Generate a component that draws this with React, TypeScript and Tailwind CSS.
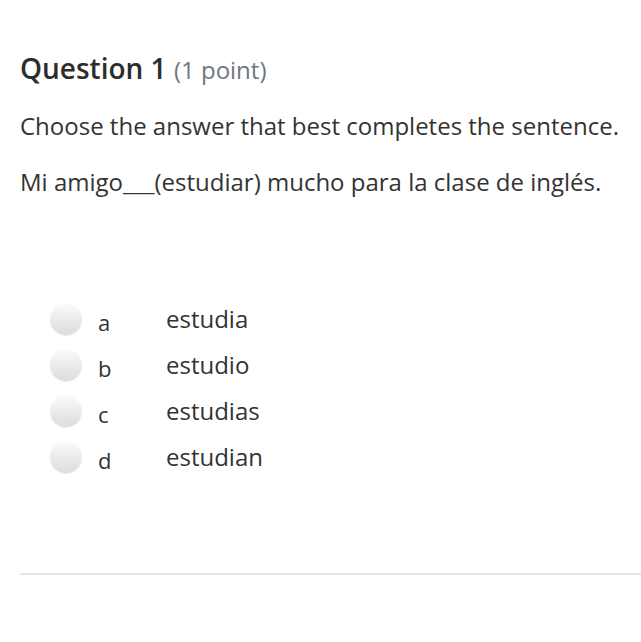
import React from 'react';

const options = [
  { letter: 'a', text: 'estudia' },
  { letter: 'b', text: 'estudio' },
  { letter: 'c', text: 'estudias' },
  { letter: 'd', text: 'estudian' },
];

export default function App() {
  return (
    <div className="min-h-screen w-[641px] bg-white text-[#333333]" style={{ fontFamily: '"Open Sans", sans-serif' }}>
      <div className="pl-5 pt-[50px]">
        <h2 className="text-[28px] leading-[36px] font-semibold text-[#2d2d2d]">
          Question 1 <span className="text-[24px] font-normal text-[#6f7780]">(1 point)</span>
        </h2>
        <p className="mt-[22px] text-[24px] leading-[32px]">Choose the answer that best completes the sentence.</p>
        <p className="mt-[24px] text-[24px] leading-[32px]">Mi amigo___(estudiar) mucho para la clase de inglés.</p>
      </div>

      {/* ANSWERS */}
      <div className="mt-[105px] pl-[50px] flex flex-col gap-[14px]">
        {options.map(o => (
          <div key={o.letter} className="flex items-center h-[32px]">
            <div className="w-[32px] h-[32px] rounded-full bg-gradient-to-b from-[#fbfbfb] to-[#dcdcdc] shadow-[0_1px_1px_rgba(0,0,0,0.08)]"></div>
            <span className="ml-[16px] w-[68px] text-[22px] leading-[32px] pt-[6px]">{o.letter}</span>
            <span className="text-[24px] leading-[32px]">{o.text}</span>
          </div>
        ))}
      </div>

      <div className="mt-[100px] ml-5 h-[2px] bg-[#e6e6e6]"></div>
    </div>
  );
}
